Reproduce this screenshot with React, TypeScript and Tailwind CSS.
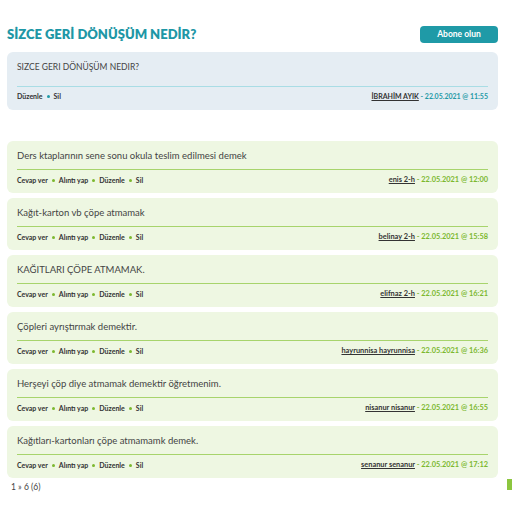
const replies = [
  { text: "Ders ktaplarının sene sonu okula teslim edilmesi demek", user: "enis 2-h", time: "22.05.2021 @ 12:00" },
  { text: "Kağıt-karton vb çöpe atmamak", user: "belinay 2-h", time: "22.05.2021 @ 15:58" },
  { text: "KAĞITLARI ÇÖPE ATMAMAK.", user: "elifnaz 2-h", time: "22.05.2021 @ 16:21" },
  { text: "Çöpleri ayrıştırmak demektir.", user: "hayrunnisa hayrunnisa", time: "22.05.2021 @ 16:36" },
  { text: "Herşeyi çöp diye atmamak demektir öğretmenim.", user: "nisanur nisanur", time: "22.05.2021 @ 16:55" },
  { text: "Kağıtları-kartonları çöpe atmamamk demek.", user: "senanur senanur", time: "22.05.2021 @ 17:12" },
];

function Dot({ color }: { color: string }) {
  return <span className={`mx-[4px] inline-block h-[3px] w-[3px] rounded-full align-middle ${color}`} />;
}

export default function App() {
  return (
    <div className="relative h-[512px] w-[512px] overflow-hidden bg-white font-['Lato',sans-serif] text-[#333]">
      <div className="ml-[7px] w-[491px] pt-[22px]">
        <div className="flex items-center justify-between">
          <h1 className="mt-[2px] text-[13px] font-extrabold leading-[20px] text-[#1e97a6]">SİZCE GERİ DÖNÜŞÜM NEDİR?</h1>
          <button className="mt-[2px] h-[17px] w-[78px] rounded-[4px] bg-[#1f9aa7] text-[8.5px] font-bold text-white">Abone olun</button>
        </div>

        <div className="mt-[8px] rounded-[6px] bg-[#e5edf3] px-[10px] pt-[9px] pb-[9px]">
          <p className="text-[8.5px] leading-[12px] text-[#444]">SIZCE GERI DÖNÜŞÜM NEDIR?</p>
          <div className="mt-[13px] h-px bg-[#a9dde5]" />
          <div className="mt-[4px] flex items-center justify-between text-[7px] font-bold leading-[10px]">
            <div className="flex items-center">
              Düzenle<Dot color="bg-[#1f9aa7]" />Sil
            </div>
            <div>
              <span className="underline">İBRAHİM AYIK</span>
              <span className="text-[#1f9aa7]"> - 22.05.2021 @ 11:55</span>
            </div>
          </div>
        </div>

        <div className="mt-[31px] flex flex-col gap-[5px]">
          {replies.map((r) => (
            <div key={r.user} className="rounded-[6px] bg-[#eef7e2] px-[10px] pt-[9px] pb-[8px]">
              <p className="text-[9.5px] leading-[12px] text-[#444]">{r.text}</p>
              <div className="mt-[7px] h-px bg-[#a7d46c]" />
              <div className="mt-[5px] flex items-center justify-between text-[7px] font-bold leading-[10px]">
                <div className="flex items-center">
                  Cevap ver<Dot color="bg-[#7cb82f]" />Alıntı yap<Dot color="bg-[#7cb82f]" />Düzenle<Dot color="bg-[#7cb82f]" />Sil
                </div>
                <div className="text-[7.4px]">
                  <span className="underline">{r.user}</span>
                  <span className="text-[#7cb82f]"> - {r.time}</span>
                </div>
              </div>
            </div>
          ))}
        </div>

        <p className="mt-[4px] pl-[4px] text-[8.5px] leading-[10px] text-[#444]">1 » 6 (6)</p>
      </div>

      {/* scroll-to-top tab on the right edge */}
      <div className="absolute top-[479px] left-[507px] h-[11px] w-[8px] bg-[#8cc63f]" />
    </div>
  );
}
